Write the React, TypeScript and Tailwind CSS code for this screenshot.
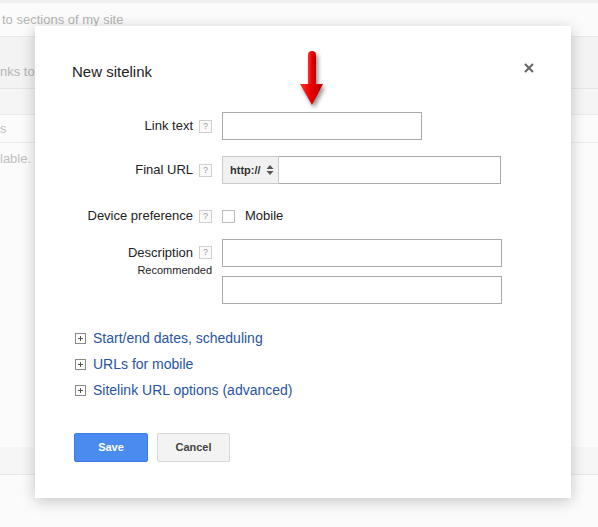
import React from "react";

function HelpBox() {
  return (
    <span className="inline-flex h-[13px] w-[13px] items-center justify-center border border-[#d0d0d0] bg-[#fafafa] text-[9px] leading-none text-[#999]">
      ?
    </span>
  );
}

function PlusBox() {
  return (
    <svg width="11" height="11" viewBox="0 0 11 11" className="shrink-0">
      <rect x="0.5" y="0.5" width="10" height="10" fill="#fff" stroke="#8a8a8a" />
      <path d="M3 5.5h5M5.5 3v5" stroke="#555" strokeWidth="1" />
    </svg>
  );
}

function Row({ label, children, className = "" }: { label: string; children: React.ReactNode; className?: string }) {
  return (
    <div className={`flex items-center ${className}`}>
      <div className="flex w-[140px] items-center justify-end gap-[6px] text-[13px] text-[#222]">
        <span>{label}</span>
        <HelpBox />
      </div>
      <div className="ml-[10px] flex items-center">{children}</div>
    </div>
  );
}

export default function App() {
  const links = ["Start/end dates, scheduling", "URLs for mobile", "Sitelink URL options (advanced)"];

  return (
    <div
      className="relative h-[527px] w-full overflow-hidden bg-[#fbfbfb]"
      style={{ fontFamily: '"Liberation Sans", Arial, sans-serif' }}
    >
      {/* page behind the dialog */}
      <div className="h-[3px] bg-[#efefef]" />
      <div className="flex h-[34px] items-center border-b border-[#e8e8e8] pl-[2px] text-[13px] text-[#b4b4b4]">
        to sections of my site
      </div>
      <div className="h-[52px] border-b border-[#e6e6e6] bg-[#f3f3f3] pt-[27px] text-[13px] leading-[16px] text-[#b4b4b4]">
        nks to
      </div>
      <div className="h-[26px] border-b border-[#ebebeb] bg-[#f5f5f5]" />
      <div className="flex h-[28px] items-center border-b border-[#ebebeb] text-[13px] text-[#c0c0c0]">s</div>
      <div className="flex h-[32px] items-center text-[13px] text-[#c0c0c0]">lable.</div>
      <div className="mt-[272px] h-[28px] border-b border-[#e8e8e8] bg-[#f6f6f6]" />

      {/* dialog */}
      <div className="absolute left-[35px] top-[26px] h-[472px] w-[536px] bg-white pl-[37px] pt-[36px] shadow-[0_3px_14px_rgba(0,0,0,0.22)]">
        <div className="flex items-start justify-between pr-[37px]">
          <h2 className="text-[15px] leading-[20px] text-[#222]">New sitelink</h2>
          <svg width="10" height="10" viewBox="0 0 10 10" className="mt-[1px]">
            <path d="M1 1l8 8M9 1l-8 8" stroke="#666" strokeWidth="2" />
          </svg>
        </div>

        <Row label="Link text" className="mt-[30px]">
          <input className="h-[28px] w-[200px] border border-[#aaa] bg-white outline-none" />
        </Row>

        <Row label="Final URL" className="mt-[16px]">
          <div className="flex h-[28px] w-[57px] items-center justify-between border border-[#c9c9c9] bg-[#f1f1f1] pl-[7px] pr-[4px] text-[11px] font-bold text-[#333]">
            <span>http://</span>
            <svg width="8" height="12" viewBox="0 0 8 12">
              <path d="M4 1l3.5 4h-7zM4 11l3.5-4h-7z" fill="#555" />
            </svg>
          </div>
          <input className="h-[28px] w-[222px] border border-l-0 border-[#aaa] bg-white outline-none" />
        </Row>

        <Row label="Device preference" className="mt-[18px] h-[28px]">
          <span className="h-[13px] w-[13px] border border-[#bdbdbd] bg-white" />
          <span className="ml-[10px] text-[13px] text-[#222]">Mobile</span>
        </Row>

        <div className="mt-[9px] flex items-start">
          <div className="flex w-[140px] flex-col items-end">
            <div className="flex h-[27px] items-center gap-[6px] text-[13px] text-[#222]">
              <span>Description</span>
              <HelpBox />
            </div>
            <div className="mt-[-2px] text-[11px] leading-[12px] text-[#222]">Recommended</div>
          </div>
          <div className="ml-[10px] flex flex-col gap-[9px]">
            <input className="h-[28px] w-[280px] border border-[#aaa] bg-white outline-none" />
            <input className="h-[28px] w-[280px] border border-[#aaa] bg-white outline-none" />
          </div>
        </div>

        <div className="mt-[21px] flex flex-col pl-[3px]">
          {links.map((l) => (
            <div key={l} className="flex h-[26px] items-center gap-[7px]">
              <PlusBox />
              <span className="text-[14px] text-[#28559f]">{l}</span>
            </div>
          ))}
        </div>

        <div className="mt-[30px] ml-[2px] flex gap-[9px]">
          <button className="h-[29px] w-[74px] rounded-[2px] border border-[#3b7de6] bg-[#4a8bef] text-[11px] font-bold text-white">
            Save
          </button>
          <button className="h-[29px] w-[73px] rounded-[2px] border border-[#d8d8d8] bg-[#f3f3f3] text-[11px] font-bold text-[#444]">
            Cancel
          </button>
        </div>
      </div>

      {/* red annotation arrow */}
      <svg
        width="34"
        height="66"
        viewBox="0 0 34 66"
        className="absolute left-[296px] top-[46px] drop-shadow-[2px_3px_2px_rgba(0,0,0,0.45)]"
      >
        <defs>
          <linearGradient id="arr" x1="0" x2="1" y1="0" y2="0">
            <stop offset="0" stopColor="#ff3030" />
            <stop offset="0.5" stopColor="#e60000" />
            <stop offset="1" stopColor="#b80000" />
          </linearGradient>
        </defs>
        <path d="M12 9a4 4 0 0 1 8 0v30h-8z" fill="url(#arr)" />
        <path d="M4 38h23l-11 21z" fill="url(#arr)" />
      </svg>
    </div>
  );
}
